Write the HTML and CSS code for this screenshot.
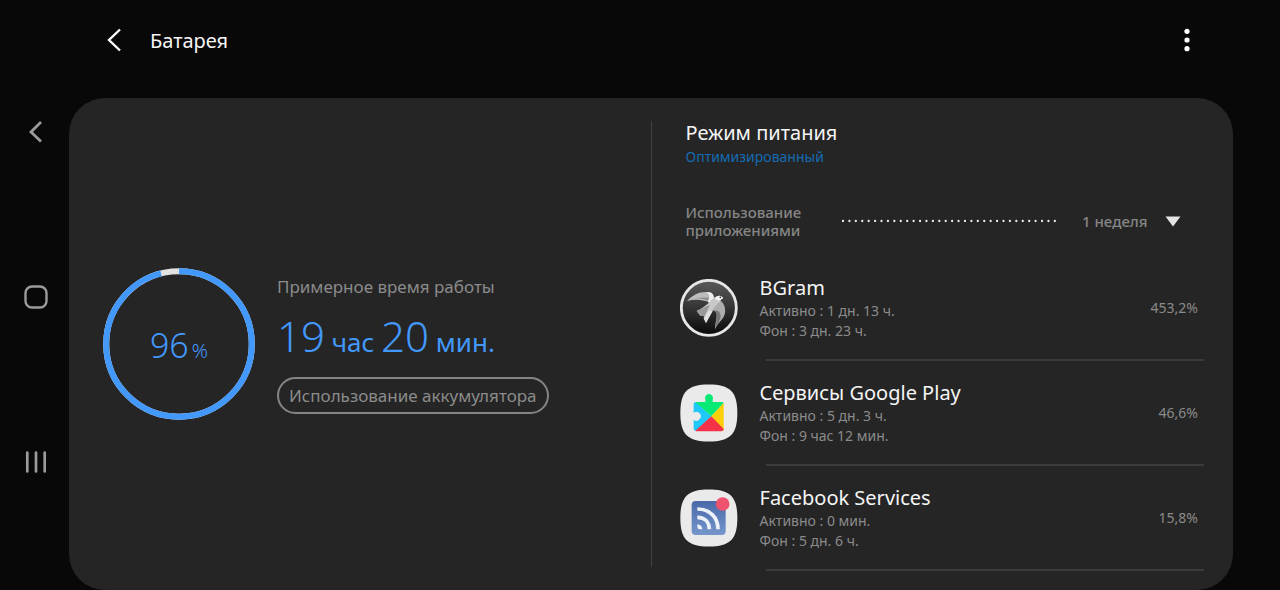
FILE: index.html
```html
<!DOCTYPE html>
<html lang="ru">
<head>
<meta charset="utf-8">
<meta name="viewport" content="width=device-width, initial-scale=1">
<title>Батарея</title>
<link rel="stylesheet" href="styles.css">
</head>
<body>
<nav class="system-nav" aria-label="Система">
  <button class="icon-button" type="button" aria-label="Назад"><svg width="24" height="24" viewBox="0 0 24 24"><path d="M17 2L7 12l10 9.500" fill="none" stroke="#9b9b9b" stroke-width="2.800"/></svg></button>
  <button class="icon-button" type="button" aria-label="Главный экран"><svg width="24" height="24" viewBox="0 0 24 24"><rect x="1.500" y="1.500" width="21" height="21" rx="6.500" fill="none" stroke="#9b9b9b" stroke-width="2.400"/></svg></button>
  <button class="icon-button" type="button" aria-label="Недавние"><svg width="24" height="24" viewBox="0 0 24 24"><path d="M3.300 2.500v19M12 2.500v19M20.700 2.500v19" fill="none" stroke="#9b9b9b" stroke-width="2.700" stroke-linecap="round"/></svg></button>
</nav>
<div class="screen">
  <header class="top-bar">
    <button class="icon-button" type="button" aria-label="Вернуться"><svg width="24" height="24" viewBox="0 0 24 24"><path d="M18 1.500L7 12l11 10.500" fill="none" stroke="#fff" stroke-width="2.400"/></svg></button>
    <h1 class="page-title">Батарея</h1>
    <button class="icon-button" type="button" aria-label="Ещё"><svg width="24" height="24" viewBox="0 0 24 24" fill="#fff"><circle cx="12" cy="3.300" r="2.600"/><circle cx="12" cy="12" r="2.600"/><circle cx="12" cy="20.700" r="2.600"/></svg></button>
  </header>
  <main class="card">
    <section class="summary">
      <div class="ring">
        <svg class="ring-art" viewBox="0 0 152 152" aria-hidden="true">
          <circle cx="76" cy="76" r="72.800" fill="none" stroke="#e2e2e2" stroke-width="6"/>
          <circle cx="76" cy="76" r="72.800" fill="none" stroke="#4398fb" stroke-width="6" pathLength="100" stroke-dasharray="96 4" transform="rotate(-90 76 76)"/>
        </svg>
        <span class="ring-value">96<small class="ring-unit">%</small></span>
      </div>
      <div class="estimate">
        <p class="estimate-label">Примерное время работы</p>
        <p class="estimate-time">19<small class="estimate-unit"> час </small>20<small class="estimate-unit"> мин.</small></p>
        <button class="usage-button" type="button">Использование аккумулятора</button>
      </div>
    </section>
    <div class="divider"></div>
    <section class="details">
      <h2 class="mode-title">Режим питания</h2>
      <p class="mode-value">Оптимизированный</p>
      <div class="usage-head">
        <label class="usage-label" for="period">Использование<br>приложениями</label>
        <svg class="dots" height="4" aria-hidden="true"><line x1="2" y1="2" x2="100%" y2="2" stroke="#ececec" stroke-width="2.300" stroke-linecap="round" stroke-dasharray="0 6.420"/></svg>
        <select class="period" id="period"><option>1 неделя</option></select>
        <svg class="arrow" width="16" height="11" viewBox="0 0 16 11" aria-hidden="true"><path d="M0.500 0.500h15L8 10.500z" fill="#e4e4e4"/></svg>
      </div>
      <ul class="apps">
        <li class="app">
          <svg class="app-icon" viewBox="30 42 174 174" aria-hidden="true">
            <defs><linearGradient id="night" x1="0" y1="0" x2="0" y2="1"><stop offset="0" stop-color="#5b5b5b"/><stop offset=".5" stop-color="#343434"/><stop offset="1" stop-color="#080808"/></linearGradient></defs>
            <circle cx="116.500" cy="128.500" r="82.500" fill="url(#night)" stroke="#e6e6e6" stroke-width="8.500"/>
            <path d="M51 108C69 87 96 77 118 82C129 85 132 94 131 105L119 112C98 103 72 102 51 108Z" fill="#bcbcbc"/>
            <path d="M51 108C77 96 102 99 121 112L128 100C104 94 77 98 51 108Z" fill="#8d8d8d"/>
            <path d="M110 81C126 79 133 90 132 101L121 119L113 108C121 98 119 88 110 81Z" fill="#ededed"/>
            <path d="M80 138C96 130 111 121 121 108C127 99 138 93 149 92L160 99L154 103C151 116 138 126 127 138L108 174L101 160L103 154L91 152Z" fill="#c9c9c9"/>
            <path d="M80 138L120 119L101 160L103 154L91 152Z" fill="#999"/>
            <path d="M101 160L117 137L128 138L108 174Z" fill="#e1e1e1"/>
            <path d="M153 108C164 116 169 137 163 151C158 166 144 172 135 193C135 172 143 158 139 144C137 138 132 135 125 137L142 117Z" fill="#adadad"/>
            <path d="M137 135C148 137 155 149 151 162L135 193C138 174 143 154 137 135Z" fill="#777"/>
            <path d="M135 101C138 94 147 90 154 94L160 99L154 103L145 107Z" fill="#f4f4f4"/><circle cx="151" cy="97" r="2.500" fill="#272727"/>
          </svg>
          <div class="app-text"><h3 class="app-name">BGram</h3><p class="app-line">Активно : 1 дн. 13 ч.</p><p class="app-line">Фон : 3 дн. 23 ч.</p></div>
          <span class="app-share">453,2%</span>
        </li>
        <li class="app">
          <svg class="app-icon" viewBox="30 26 174 174" aria-hidden="true">
            <path d="M116.500 27.500C180 27.500 202 49 202 113S180 198.500 116.500 198.500S31 177 31 113S53 27.500 116.500 27.500Z" fill="#eaeaea"/>
            <path d="M78 80L124 123L80 167Q71 167 71 159V133A13 13 0 1 0 71 113V87Q71 80 78 80Z" fill="#1fc8fb"/>
            <path d="M76 80H106V73A12 12 0 1 1 128 73V80H156Q160 80 161 84L124 123Z" fill="#08e975"/>
            <path d="M161 83V162Q161 166 159 166L124 123Z" fill="#ffd00a"/>
            <path d="M124 123L161 161Q160 168 154 168H81Q78 168 76 166Z" fill="#f43249"/>
          </svg>
          <div class="app-text"><h3 class="app-name">Сервисы Google Play</h3><p class="app-line">Активно : 5 дн. 3 ч.</p><p class="app-line">Фон : 9 час 12 мин.</p></div>
          <span class="app-share">46,6%</span>
        </li>
        <li class="app">
          <svg class="app-icon" viewBox="30 26 174 174" aria-hidden="true">
            <defs><linearGradient id="feed" x1="0" y1="0" x2="0" y2="1"><stop offset="0" stop-color="#4868a9"/><stop offset="1" stop-color="#7696cc"/></linearGradient></defs>
            <path d="M116.500 27.500C180 27.500 202 49 202 113S180 198.500 116.500 198.500S31 177 31 113S53 27.500 116.500 27.500Z" fill="#eaeaea"/>
            <rect x="65" y="62" width="102" height="102" rx="12" fill="url(#feed)"/>
            <path d="M82 86C119 86 144 111 144 147M82 111C104 111 118 125 118 147" fill="none" stroke="#edf1f8" stroke-width="11"/>
            <path d="M82 132Q96 133 97 147H89Q82 147 82 140Z" fill="#edf1f8"/>
            <circle cx="158" cy="71" r="20.500" fill="#ef526f"/>
          </svg>
          <div class="app-text"><h3 class="app-name">Facebook Services</h3><p class="app-line">Активно : 0 мин.</p><p class="app-line">Фон : 5 дн. 6 ч.</p></div>
          <span class="app-share">15,8%</span>
        </li>
      </ul>
    </section>
  </main>
</div>
</body>
</html>
```
FILE: styles.css
```css
* { box-sizing: border-box; }
body {
  display: flex;
  min-height: 100vh;
  margin: 0;
  background: #080808;
  color: #f5f5f5;
  font-family: "Noto Sans", "Open Sans", sans-serif;
}
h1, h2, h3, p, ul { margin: 0; padding: 0; font-weight: 400; }
svg { display: block; }
button, select { font-family: inherit; cursor: pointer; }
.icon-button { padding: 0; border: 0; background: none; }

.system-nav {
  display: flex;
  flex: none;
  flex-direction: column;
  align-items: center;
  justify-content: center;
  gap: 141px;
  width: 69px;
  padding: 4px 0 0 3px;
}
.screen {
  display: flex;
  flex: 1;
  flex-direction: column;
  min-width: 0;
  padding-right: 47px;
}
.top-bar {
  display: flex;
  align-items: center;
  gap: 24px;
  padding: 24px 34px 42px 33px;
}
.page-title { flex: 1; padding-top: 1px; font-size: 20px; line-height: 31px; }

.card {
  display: grid;
  flex: 1;
  grid-template-columns: 1fr 1px 1fr;
  border-radius: 36px;
  background: #252525;
}
.divider { margin: 23px 0; background: #414141; }

.summary { display: flex; align-items: center; gap: 22px; padding-left: 34px; }
.ring { display: grid; flex: none; place-items: center; width: 152px; }
.ring-art, .ring-value { grid-area: 1 / 1; }
.ring-art { width: 100%; }
.ring-value { padding-top: 2px; color: #4398fb; font-size: 34px; font-weight: 300; line-height: 40px; }
.ring-unit { margin-left: 3px; font-size: 20px; line-height: 1; }
.estimate-label { color: #8b8b8b; font-size: 17px; line-height: 24px; }
.estimate-time { margin: 10px 0 14px; color: #4398fb; font-size: 42px; font-weight: 300; line-height: 54px; white-space: nowrap; }
.estimate-unit { font-size: 26px; font-weight: 400; line-height: 1; }
.usage-button {
  display: block;
  height: 37px;
  padding: 0 10px;
  border: 2px solid #858585;
  border-radius: 19px;
  background: none;
  color: #8b8b8b;
  font-size: 17px;
  white-space: nowrap;
}

.details { padding: 23px 29px 16px 28px; }
.mode-title { padding-left: 6px; font-size: 20px; line-height: 24px; }
.mode-value { padding-left: 6px; color: #156bb4; font-size: 14px; line-height: 24px; }
.usage-head { display: flex; align-items: center; margin-top: 34px; padding: 0 23px 0 6px; }
.usage-label { color: #858585; font-size: 15px; font-weight: 500; line-height: 18px; }
.dots { flex: 1; width: 0; min-width: 0; margin: 0 24px 0 40px; }
.period {
  padding: 0;
  border: 0;
  appearance: none;
  background: none;
  color: #858585;
  font-size: 15px;
  font-weight: 500;
}
.arrow { margin-left: 17px; pointer-events: none; }

.apps { margin-top: 17px; list-style: none; }
.app {
  display: grid;
  grid-template-columns: 58px 1fr auto;
  align-items: center;
  column-gap: 22px;
  padding-top: 18px;
}
.app::after {
  grid-column: 1 / -1;
  height: 2px;
  margin: 18px 0 0 86px;
  background: #3b3b3b;
  content: "";
}
.app-icon { width: 58px; height: 58px; }
.app-name { font-size: 20px; line-height: 27px; }
.app-line { color: #8b8b8b; font-size: 14px; line-height: 20px; }
.app-share { padding-right: 6px; color: #8b8b8b; font-size: 14px; }
```
